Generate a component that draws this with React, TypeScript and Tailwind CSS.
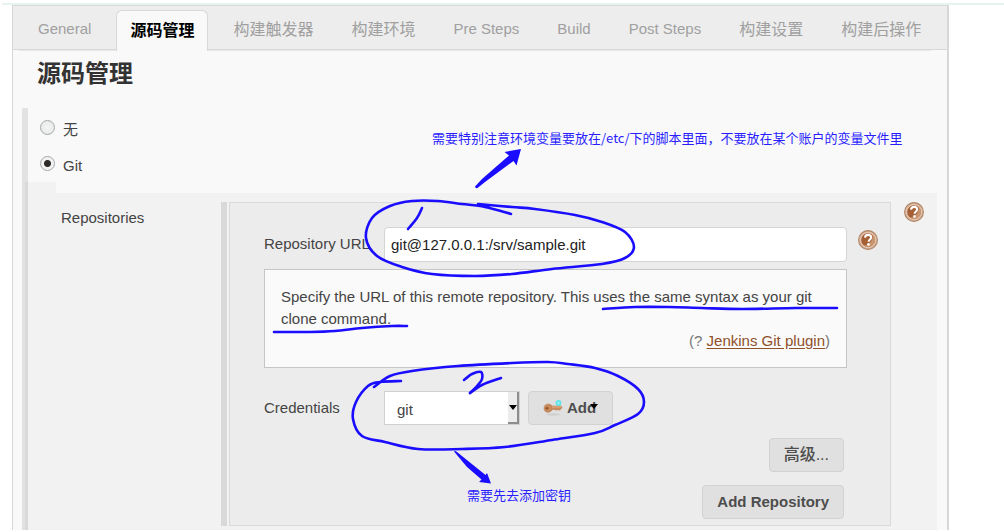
import type { ReactNode } from "react";

type Point = [number, number];

/* Catmull-Rom spline through the given points. */
function smooth(points: Point[]): string {
  let d = `M${points[0][0]} ${points[0][1]}`;
  for (let i = 0; i < points.length - 1; i++) {
    const p0 = points[Math.max(i - 1, 0)];
    const p1 = points[i];
    const p2 = points[i + 1];
    const p3 = points[Math.min(i + 2, points.length - 1)];
    d += ` C${p1[0] + (p2[0] - p0[0]) / 6} ${p1[1] + (p2[1] - p0[1]) / 6} ${p2[0] - (p3[0] - p1[0]) / 6} ${
      p2[1] - (p3[1] - p1[1]) / 6
    } ${p2[0]} ${p2[1]}`;
  }
  return d;
}

const strokes: Point[][] = [
  // ring round the repository URL
  [[478, 204], [512, 207], [535, 209], [575, 215], [602, 222], [625, 232], [634, 247], [625, 258], [602, 264], [552, 269], [512, 274], [475, 276], [432, 274], [402, 267], [377, 256], [366, 238], [372, 218], [390, 206], [412, 201], [438, 201], [462, 204], [485, 207], [511, 214]],
  // digit 1
  [[422, 208], [417, 218], [408, 229]],
  // underlines in the help text
  [[603, 309], [635, 307], [669, 307], [702, 308], [742, 309], [796, 308], [837, 308]],
  [[274, 332], [310, 332], [335, 331], [362, 328], [392, 326], [407, 326]],
  // ring round the credentials
  [[374, 387], [390, 376], [412, 371], [458, 366], [512, 363], [548, 362], [568, 364], [595, 368], [618, 376], [638, 389], [644, 402], [638, 414], [615, 425], [595, 433], [552, 440], [505, 447], [462, 449], [418, 449], [385, 442], [362, 436], [353, 419], [356, 402], [368, 386], [380, 382], [401, 381]],
  // digit 2
  [[464, 380], [472, 374], [481, 372], [482, 379], [477, 386], [470, 393]],
  [[470, 393], [482, 385], [501, 378]],
];

const tabs = ["General", "源码管理", "构建触发器", "构建环境", "Pre Steps", "Build", "Post Steps", "构建设置", "构建后操作"];

function Tab({ label, active }: { label: string; active: boolean }) {
  const latin = /^[A-Z]/.test(label);
  return (
    <button
      type="button"
      role="tab"
      aria-selected={active}
      className={`whitespace-nowrap px-[13px] ${latin ? "text-[15px]" : "text-base"} ${
        active
          ? "-mb-0.5 h-[41px] rounded-t-md border border-b-0 border-[#d8d8d8] bg-[#f9f9f9] font-bold text-black"
          : "h-[39px] text-[#a0a0a0]"
      }`}
    >
      {label}
    </button>
  );
}

function HelpButton({ label }: { label: string }) {
  return (
    <button type="button" aria-label={label} className="size-5 shrink-0">
      <svg viewBox="0 0 20 20" className="size-5">
        <circle cx="10" cy="10" r="9.4" fill="#d9b59a" stroke="#b08466" strokeWidth="1.1" />
        <circle cx="10" cy="10" r="7.3" fill="#a45f34" stroke="#f0ddcf" strokeWidth="0.8" />
        <path d="M10 17a7 7 0 0 0 7-7c0-2-1-4-2.500-5.200C15 10 13 14 6 15.700A7 7 0 0 0 10 17z" fill="#c99570" />
        <path d="M7 7.700C7.200 5.700 8.400 4.900 10.100 4.900c1.800 0 3 .9 3 2.500 0 2.100-2.400 2.200-2.500 4.400" fill="none" stroke="#fff" strokeWidth="2.1" />
        <circle cx="10.500" cy="14.400" r="1.300" fill="#fff" />
      </svg>
    </button>
  );
}

function Radio({ label, checked, className }: { label: string; checked?: boolean; className?: string }) {
  return (
    <label className={`flex h-9 gap-2 ${className ?? ""}`}>
      <input
        type="radio"
        name="scm"
        defaultChecked={checked}
        className="mt-1 size-[15px] appearance-none rounded-full border border-[#a5a9a9] bg-[radial-gradient(circle,#f4f4f4,#e4e6e6)] checked:bg-[radial-gradient(circle,#2e2a28_0_3px,#f2f2f2_4px)]"
      />
      <span className="pt-0.5 leading-6">{label}</span>
    </label>
  );
}

function FormButton({ children }: { children: ReactNode }) {
  return (
    <button
      type="button"
      className="flex h-[34px] items-center rounded border border-[#d2d2d2] bg-[#e0e0e0] px-3.5 font-bold text-[#4d4d4d]"
    >
      {children}
    </button>
  );
}

function KeyIcon() {
  return (
    <svg viewBox="0 0 20 18" className="h-[18px] w-5 shrink-0" aria-hidden="true">
      <ellipse cx="10" cy="15.500" rx="7" ry="1.200" fill="#cfcfcf" />
      <path d="M1 9.200C1 6.600 3 5 5.300 5c1.900 0 3 .8 3.700 2h9l1 1.300-1 1.700-1.500 1.200-1.500-.7-1.400.8-1.600-.8H9.200C8.500 12.300 7 13.300 5 13.300 2.700 13.300 1 11.700 1 9.200z" fill="#c98b5a" stroke="#b5764a" strokeWidth=".5" />
      <path d="M9 8h9" stroke="#e3b48d" />
      <circle cx="4" cy="9.300" r="1.300" fill="#8d5128" />
      <circle cx="15.500" cy="4" r="2.900" fill="#5fe3e8" />
      <circle cx="15.500" cy="4" r="1.200" fill="#9ff4f4" />
    </svg>
  );
}

function Annotations() {
  return (
    <>
      <svg width="1004" height="530" className="pointer-events-none absolute left-0 top-0" aria-hidden="true">
        <g fill="none" stroke="#1a0dff" strokeWidth="2.600" strokeLinecap="round" strokeLinejoin="round">
          {strokes.map((points, i) => (
            <path key={i} d={smooth(points)} />
          ))}
        </g>
        <g fill="#1a0dff">
          <path d="M475 186.500L482 179L509 155.500L504.500 152L521 149L516.500 165.500L513.500 161L485 182L477.500 188Q475.500 189 475 186.500Z" />
          <path d="M454 451.500Q455 450.500 457 452L485.500 475L487 473L491 483.500L479 482L481.500 479.500L467 467Z" />
        </g>
      </svg>
      <p className="pointer-events-none absolute left-[432px] top-[128px] whitespace-nowrap font-['Noto_Sans_CJK_SC',sans-serif] text-[13px] leading-5 text-[#2a1eff]">
        需要特别注意环境变量要放在/etc/下的脚本里面，不要放在某个账户的变量文件里
      </p>
      <p className="pointer-events-none absolute left-[467px] top-[485px] whitespace-nowrap font-['Noto_Sans_CJK_SC',sans-serif] text-[13px] leading-5 text-[#2a1eff]">
        需要先去添加密钥
      </p>
    </>
  );
}

export default function App() {
  return (
    <div className="relative bg-white pt-[3px] font-['Liberation_Sans','Noto_Sans_CJK_SC',sans-serif] text-[15px] text-[#444]">
      <div className="ml-0.5 h-0.5 bg-[#e6f3ee]" />
      <main className="ml-3 mr-[55px] border-l border-r-2 border-t border-[#d8d8d8] bg-[#f9f9f9]">
        <div role="tablist" className="flex h-11 items-end gap-3 border-b border-[#d8d8d8] bg-[#ededed] pl-3">
          {tabs.map((label, i) => (
            <Tab key={label} label={label} active={i === 1} />
          ))}
        </div>
        <div className="ml-1.5 mr-4 h-px bg-[#e8e8e8]" />

        <h1 className="ml-6 py-1.5 text-2xl font-bold leading-[34px] text-[#333]">源码管理</h1>

        <section className="ml-[9px] mr-2.5 mt-[11px] border-l-[6px] border-[#e2e2e2]">
          <div className="pl-3 pt-2">
            <Radio label="无" />
            <Radio label="Git" checked className="pb-1" />
          </div>

          <div className="-ml-[3px] -mt-1.5 border-l-[3px] border-[#d9d9d9] bg-[#f2f2f2]">
            <div className="ml-7 h-[11px] bg-[#f9f9f9]" />
            <div className="flex pb-1 pl-[33px] pt-[9px]">
              <div className="w-40 shrink-0 pt-[5px] leading-[22px]">Repositories</div>
              <div className="flex min-w-0 flex-1 border-l-[6px] border-[#d9d9d9] pl-0.5">
                <div className="min-w-0 flex-1 border border-[#dadada] bg-[#ececec] pb-[6px] pl-[34px] pr-3 pt-6">
                  <div className="flex items-center">
                    <label htmlFor="repository-url" className="w-[120px] shrink-0">
                      Repository URL
                    </label>
                    <input
                      id="repository-url"
                      type="text"
                      defaultValue="git@127.0.0.1:/srv/sample.git"
                      className="h-[35px] min-w-0 flex-1 rounded border border-[#d4d4d4] bg-white px-1.5 text-[#222]"
                    />
                    <div className="ml-[11px] -mt-[9px] flex">
                      <HelpButton label="Help for Repository URL" />
                    </div>
                  </div>

                  <div className="mr-[31px] mt-[7px] border border-[#c6c6c6] bg-[#fafafa] px-4 pb-[15px] pt-4 leading-[22px]">
                    <p>Specify the URL of this remote repository. This uses the same syntax as your git clone command.</p>
                    <p className="text-right text-[#777]">
                      (?{" "}
                      <a href="#git-plugin" className="text-[#8f4f2a] underline underline-offset-2">
                        Jenkins Git plugin
                      </a>
                      )
                    </p>
                  </div>

                  <div className="mt-[23px] flex items-center">
                    <label htmlFor="credentials" className="w-[120px] shrink-0">
                      Credentials
                    </label>
                    <div className="relative w-[136px]">
                      <select
                        id="credentials"
                        className="block h-[34px] w-full appearance-none border border-[#d0d0d0] bg-white pl-3 pt-1 text-[#444]"
                      >
                        <option>git</option>
                      </select>
                      <span className="pointer-events-none absolute inset-y-px right-px flex w-[11px] items-center justify-center border-b-2 border-r-2 border-[#8d8d8d] bg-[#ececec]">
                        <svg viewBox="0 0 8 5" className="h-[5px] w-2 shrink-0" aria-hidden="true">
                          <path d="M0 0h8L4 5z" fill="#000" />
                        </svg>
                      </span>
                    </div>
                    <div className="ml-2">
                      <FormButton>
                        <KeyIcon />
                        <span className="ml-1">Add</span>
                        <svg viewBox="0 0 8 5" className="-ml-1.5 mb-1 h-[5px] w-2 shrink-0" aria-hidden="true">
                          <path d="M0 0h8L4 5z" fill="#000" />
                        </svg>
                      </FormButton>
                    </div>
                  </div>

                  <div className="mr-[34px] mt-[13px] flex flex-col items-end gap-[13px]">
                    <FormButton>
                      <span className="text-base font-medium">高级...</span>
                    </FormButton>
                    <FormButton>Add Repository</FormButton>
                  </div>
                </div>
              </div>
              <div className="w-[46px] shrink-0 pl-[13px]">
                <HelpButton label="Help for Repositories" />
              </div>
            </div>
          </div>
        </section>
      </main>
      <Annotations />
    </div>
  );
}
